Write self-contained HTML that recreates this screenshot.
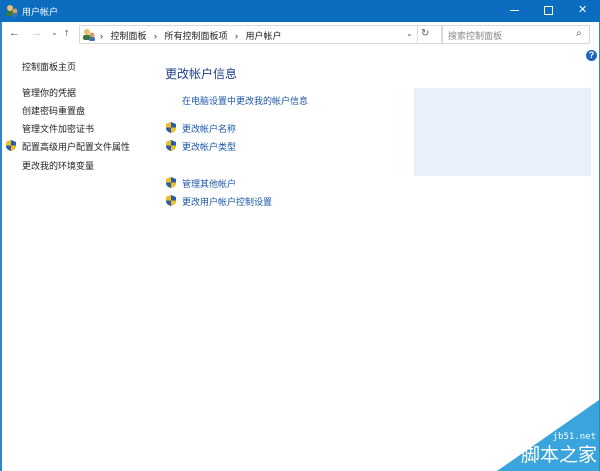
<!DOCTYPE html>
<html><head><meta charset="utf-8"><style>
body{margin:0;width:600px;height:471px;overflow:hidden;background:#fff;font-family:"Liberation Sans","Noto Sans CJK SC",sans-serif;position:relative}
.t{position:absolute;white-space:nowrap;font-size:9px}
.title{position:absolute;left:0;top:0;width:600px;height:22px;background:#0b6cc0}
.lb{position:absolute;left:0;top:22px;width:2px;height:449px;background:#2f86c8}
.rb{position:absolute;right:0;top:22px;width:1px;height:449px;background:#2f86c8}
.link{color:#1a56a8}
.blk{color:#222}
.sh{position:absolute;width:10px;height:11px}
</style></head><body>
<div class="title"></div>
<div class="lb"></div><div class="rb"></div>
<svg style="position:absolute;left:5px;top:4px" width="14" height="13"><circle cx="5" cy="4" r="3" fill="#e8c070"/><rect x="1" y="7" width="8" height="5" rx="2" fill="#3a7a3a"/><circle cx="10" cy="7" r="2.5" fill="#d0a060"/><rect x="7" y="9" width="6" height="4" rx="1.5" fill="#4070b0"/></svg>
<div class="t" style="left:22px;top:5px;color:#fff;font-size:9px">用户帐户</div>
<div style="position:absolute;left:510px;top:10px;width:9px;height:1px;background:#fff"></div>
<div style="position:absolute;left:544px;top:6px;width:7px;height:7px;border:1px solid #fff"></div>
<div class="t" style="left:578px;top:3px;color:#fff;font-size:11px">✕</div>
<div class="t" style="left:9px;top:27px;color:#555;font-size:11px">←</div>
<div class="t" style="left:31px;top:27px;color:#bbb;font-size:11px">→</div>
<div class="t" style="left:51px;top:28px;color:#666;font-size:8px">⌄</div>
<div class="t" style="left:64px;top:27px;color:#444;font-size:11px">↑</div>
<div style="position:absolute;left:79px;top:25px;width:364px;height:19px;border:1px solid #d9d9d9;box-sizing:border-box"></div>
<div style="position:absolute;left:417px;top:25px;width:1px;height:19px;background:#ddd"></div>
<svg style="position:absolute;left:82px;top:28px" width="14" height="13"><circle cx="5" cy="4" r="3" fill="#e8c070"/><rect x="1" y="7" width="8" height="5" rx="2" fill="#3a7a3a"/><circle cx="10" cy="7" r="2.5" fill="#d0a060"/><rect x="7" y="9" width="6" height="4" rx="1.5" fill="#4070b0"/></svg>
<div class="t blk" style="left:100px;top:29px">›&nbsp;&nbsp; 控制面板 &nbsp;&nbsp;› &nbsp;&nbsp;所有控制面板项 &nbsp;&nbsp;› &nbsp;&nbsp;用户帐户</div>
<div class="t" style="left:406px;top:29px;color:#555;font-size:8px">⌄</div>
<div class="t" style="left:421px;top:28px;color:#555;font-size:10px">↻</div>
<div style="position:absolute;left:441px;top:25px;width:149px;height:19px;border:1px solid #d9d9d9;box-sizing:border-box"></div>
<div class="t" style="left:448px;top:29px;color:#888">搜索控制面板</div>
<div class="t" style="left:576px;top:28px;color:#555;font-size:10px">⌕</div>
<div style="position:absolute;left:586px;top:50px;width:11px;height:11px;border-radius:50%;background:#1c64c0;color:#fff;font-size:9px;font-weight:bold;text-align:center;line-height:11px">?</div>
<div class="t blk" style="left:22px;top:60px">控制面板主页</div>
<div class="t blk" style="left:22px;top:86px">管理你的凭据</div>
<div class="t blk" style="left:22px;top:104px">创建密码重置盘</div>
<div class="t blk" style="left:22px;top:122px">管理文件加密证书</div>
<div class="t blk" style="left:22px;top:140px">配置高级用户配置文件属性</div>
<div class="t blk" style="left:22px;top:159px">更改我的环境变量</div>
<div class="t" style="left:165px;top:65px;font-size:12px;color:#1e3f8a">更改帐户信息</div>
<div class="t link" style="left:182px;top:94px">在电脑设置中更改我的帐户信息</div>
<div class="t link" style="left:182px;top:122px">更改帐户名称</div>
<div class="t link" style="left:182px;top:140px">更改帐户类型</div>
<div class="t link" style="left:182px;top:177px">管理其他帐户</div>
<div class="t link" style="left:182px;top:195px">更改用户帐户控制设置</div>
<svg width="0" height="0" style="position:absolute"><defs><g id="s"><path d="M5 0L10 2V6C10 9 7 10.5 5 11C3 10.5 0 9 0 6V2Z" fill="#2a5ca8"/><path d="M5 0V5.5H0V2ZM5 5.5H10V6C10 9 7 10.5 5 11Z" fill="#f0c020"/></g></defs></svg>
<svg class="sh" style="left:6px;top:140px"><use href="#s"/></svg>
<svg class="sh" style="left:166px;top:122px"><use href="#s"/></svg>
<svg class="sh" style="left:166px;top:140px"><use href="#s"/></svg>
<svg class="sh" style="left:166px;top:177px"><use href="#s"/></svg>
<svg class="sh" style="left:166px;top:195px"><use href="#s"/></svg>
<div style="position:absolute;left:414px;top:88px;width:177px;height:88px;background:#e8f1fb"></div>
<svg style="position:absolute;left:0;top:0" width="600" height="471"><polygon points="599,400 599,471 497,471" fill="#3aa4dc"/></svg>
<div class="t" style="right:4px;top:432px;color:#fff;font-size:9px;font-family:'DejaVu Sans Mono',monospace">jb51.net</div>
<div class="t" style="right:3px;top:444px;color:#fff;font-size:19px;line-height:24px">脚本之家</div>
</body></html>
